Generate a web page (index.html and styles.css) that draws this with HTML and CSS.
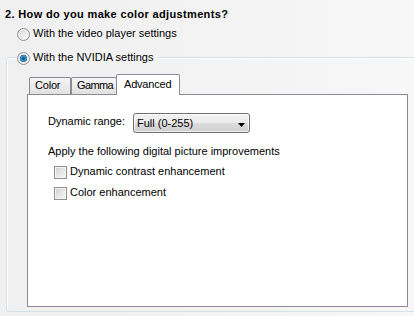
FILE: index.html
```html
<!DOCTYPE html>
<html>
<head>
<meta charset="utf-8">
<link rel="stylesheet" href="styles.css">
</head>
<body>
<div class="page">
  <div class="title">2. How do you make color adjustments?</div>
  <div class="option">
    <span class="radio"></span><span>With the video player settings</span>
  </div>
  <fieldset class="group">
    <legend class="legend">
      <span class="radio checked"></span><span>With the NVIDIA settings</span>
    </legend>
    <div class="tabs-wrap">
      <div class="tabs">
        <div class="tab tab-color">Color</div>
        <div class="tab tab-gamma">Gamma</div>
        <div class="tab tab-adv active">Advanced</div>
      </div>
      <div class="panel">
        <div class="range-row">
          <span class="range-label">Dynamic range:</span>
          <div class="combo">
            <span>Full (0-255)</span>
            <svg class="arrow" width="7" height="4" viewBox="0 0 7 4"><polygon points="0,0 7,0 3.5,4" fill="#000"/></svg>
          </div>
        </div>
        <div class="apply">Apply the following digital picture improvements</div>
        <div class="check-row first">
          <span class="checkbox"></span><span>Dynamic contrast enhancement</span>
        </div>
        <div class="check-row">
          <span class="checkbox"></span><span>Color enhancement</span>
        </div>
      </div>
    </div>
  </fieldset>
</div>
</body>
</html>
```

FILE: styles.css
```css
html, body {
  margin: 0;
  padding: 0;
}
body {
  width: 414px;
  height: 316px;
  overflow: hidden;
  background: linear-gradient(to right, #f0f0f0 0%, #f2f2f2 40%, #f7f7f7 100%);
  font-family: "Liberation Sans", Arial, sans-serif;
  font-size: 11px;
  line-height: 13px;
  color: #000;
}
.page {
  padding-top: 8px;
}
.title {
  font-weight: bold;
  letter-spacing: 0.35px;
  margin-left: 5px;
  height: 13px;
}
.option {
  display: flex;
  align-items: flex-start;
  margin: 6px 0 0 17px;
  height: 13px;
}
.radio {
  display: inline-block;
  flex: none;
  box-sizing: border-box;
  width: 13px;
  height: 13px;
  border-radius: 50%;
  border: 1px solid #8f9092;
  background: linear-gradient(135deg, #d4d4d4 0%, #ececec 55%, #fbfbfb 100%);
  box-shadow: inset 0 0 0 1px #f3f3f3;
  margin: 1px 3px 0 0;
}
.radio.checked {
  background:
    radial-gradient(circle at 50% 50%, #0c4f86 0, #1c6fab 1.6px, #4fa6dc 2.6px, #1b5f92 3.4px, rgba(27,95,146,0) 3.9px),
    linear-gradient(135deg, #d4d4d4 0%, #ececec 55%, #fbfbfb 100%);
}
.group {
  box-sizing: border-box;
  width: 414px;
  min-width: 0;
  margin: 11px 0 0 6px;
  padding: 0 0 4px 9px;
  border: 1px solid #d5dfe5;
  border-radius: 3px;
  box-shadow: inset 1px 1px 0 #ffffff;
}
.legend {
  display: flex;
  align-items: flex-start;
  padding: 0 5px 0 1px;
  height: 13px;
  line-height: 13px;
}
.tabs-wrap {
  margin: 10px 0 0 11px;
  width: 381px;
}
.tabs {
  display: flex;
  align-items: flex-end;
  height: 20px;
  padding-left: 2px;
}
.tab {
  box-sizing: border-box;
  height: 17px;
  border: 1px solid #898c95;
  border-bottom: none;
  border-radius: 2px 2px 0 0;
  background: linear-gradient(#f6f6f6 0%, #ececec 50%, #e0e0e0 100%);
  padding-left: 5px;
  line-height: 15px;
  letter-spacing: -0.2px;
  white-space: nowrap;
  overflow: hidden;
}
.tab-color {
  width: 42px;
}
.tab-gamma {
  width: 46px;
  letter-spacing: -0.6px;
}
.tab-adv {
  width: 64px;
  margin-left: -1px;
}
.tab.active {
  position: relative;
  z-index: 1;
  height: 21px;
  margin-bottom: -1px;
  background: #ffffff;
  padding-left: 7px;
  line-height: 18px;
}
.panel {
  box-sizing: border-box;
  height: 213px;
  border: 1px solid #898c95;
  background: #ffffff;
  padding: 18px 20px;
}
.range-row {
  display: flex;
  align-items: flex-start;
}
.range-label {
  margin-top: 2px;
  width: 85px;
}
.combo {
  box-sizing: border-box;
  width: 117px;
  height: 20px;
  border: 1px solid #707070;
  border-radius: 3px;
  background: linear-gradient(#f2f2f2 0%, #ebebeb 50%, #dddddd 50%, #cfcfcf 100%);
  box-shadow: inset 0 0 0 1px rgba(255,255,255,0.7);
  display: flex;
  align-items: center;
  justify-content: space-between;
  padding: 0 4px 0 3px;
  line-height: 18px;
}
.arrow {
  margin-top: 3px;
}
.apply {
  margin-top: 12px;
}
.check-row {
  display: flex;
  align-items: flex-start;
  margin: 8px 0 0 6px;
  height: 13px;
}
.check-row.first {
  margin-top: 7px;
}
.checkbox {
  display: inline-block;
  flex: none;
  box-sizing: border-box;
  width: 13px;
  height: 13px;
  margin: 1px 3px 0 0;
  border: 1px solid #8f9092;
  background: linear-gradient(135deg, #cdcdcd 0%, #e6e6e6 50%, #f7f7f7 100%);
  box-shadow: inset 0 0 0 1px #f4f4f4;
}
```
